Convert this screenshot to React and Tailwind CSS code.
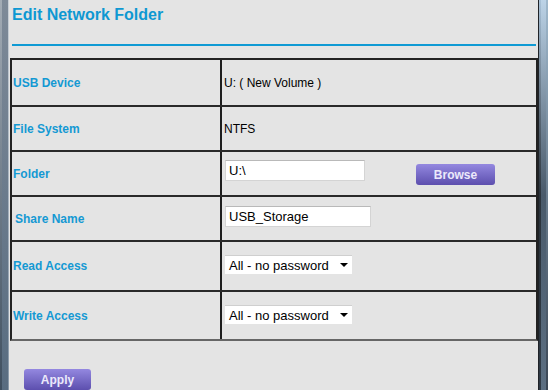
const rows = [
  { label: "USB Device", h: "h-[45px]", kind: "text", value: "U: ( New Volume )" },
  { label: "File System", h: "h-[45px]", kind: "text", value: "NTFS" },
  { label: "Folder", h: "h-[45px]", kind: "folder", value: "U:\\", pad: "pt-[8px]" },
  { label: "Share Name", h: "h-[45px]", kind: "input", value: "USB_Storage", indent: true, pad: "pt-[9px]" },
  { label: "Read Access", h: "h-[50px]", kind: "select", value: "All - no password", pad: "pt-[13px]" },
  { label: "Write Access", h: "h-[49px]", kind: "select", value: "All - no password", pad: "pt-[13px]" },
];

// fake html select, native one draws its own arrow
function FakeSelect({ value }) {
  return (
    <div className="flex items-center w-[127px] h-[19px] bg-white border-t border-[#cfcfcf] pl-[4px] pr-[4px]">
      <span className="flex-1 text-[13px] leading-none text-black whitespace-nowrap">{value}</span>
      <span className="w-0 h-0 border-l-[4px] border-r-[4px] border-t-[4px] border-l-transparent border-r-transparent border-t-black" />
    </div>
  );
}

function PurpleButton({ children, className = "" }) {
  return (
    <button
      className={`block h-[21px] rounded-[3px] bg-gradient-to-b from-[#9488e0] to-[#5d4fae] text-[12px] font-bold text-[#ece9fb] leading-none ${className}`}
    >
      {children}
    </button>
  );
}

function TextBox({ value, w }) {
  return (
    <div className={`${w} h-[21px] bg-white border border-[#d4d4d4] border-t-[#b9b9b9] flex items-center pl-[3px]`}>
      <span className="text-[13px] leading-none text-black">{value}</span>
    </div>
  );
}

export default function App() {
  return (
    <div className="w-[548px] h-[390px] flex overflow-hidden bg-[#e4e4e4] font-['Liberation_Sans',Arial,sans-serif]">
      <div className="w-[9px] shrink-0 flex">
        <div className="w-[2px] bg-gradient-to-b from-[#a3acb5] to-[#3f4f5f]" />
        <div className="flex-1 bg-gradient-to-b from-[#7e8a98] to-[#586c80]" />
        <div className="w-[1px] bg-gradient-to-b from-[#c9d0d7] to-[#8797a7]" />
      </div>

      <div className="w-[529px] shrink-0 flex flex-col">
        <div className="h-[44px] shrink-0 pl-[3px] pt-[6px]">
          <h1 className="text-[16px] font-bold text-[#0e98d2] leading-[18px]">Edit Network Folder</h1>
        </div>
        <div className="ml-[3px] w-[524px] h-[2px] shrink-0 bg-[#0f9ad4]" />

        <div className="mt-[12px] ml-[1px] w-[528px] shrink-0 border-2 border-[#222] border-b-[#666] flex flex-col">
          {rows.map((r, i) => (
            <div key={r.label} className={`flex shrink-0 ${r.h} ${i > 0 ? "border-t-2 border-[#2a2a2a]" : ""}`}>
              <div className="w-[210px] shrink-0 border-r-2 border-[#1e1e1e] flex items-center pl-[1px]">
                <span className={`text-[12px] font-bold text-[#1499d3] ${r.indent ? "pl-[2px]" : ""}`}>{r.label}</span>
              </div>
              <div className={`flex-1 flex ${r.pad ? "items-start " + r.pad : "items-center"}`}>
                {r.kind === "text" && <span className="pl-[2px] text-[12px] text-black">{r.value}</span>}
                {r.kind === "folder" && (
                  <div className="flex items-start pl-[3px]">
                    <TextBox value={r.value} w="w-[140px]" />
                    <PurpleButton className="ml-[51px] w-[79px] mt-[4px]">Browse</PurpleButton>
                  </div>
                )}
                {r.kind === "input" && (
                  <div className="pl-[3px]">
                    <TextBox value={r.value} w="w-[146px]" />
                  </div>
                )}
                {r.kind === "select" && (
                  <div className="pl-[3px]">
                    <FakeSelect value={r.value} />
                  </div>
                )}
              </div>
            </div>
          ))}
        </div>

        <div className="pl-[15px] pt-[28px] shrink-0">
          <PurpleButton className="w-[67px]">Apply</PurpleButton>
        </div>
      </div>

      <div className="w-[10px] shrink-0 flex">
        <div className="w-[1px] bg-[#1f2328]" />
        <div className="w-[2px] bg-gradient-to-b from-[#a9c2d8] via-[#2c343c] to-[#2e3944]" />
        <div className="flex-1 bg-gradient-to-b from-[#bcd3e7] via-[#4a5a6a] to-[#5b6e81]" />
        <div className="w-[2px] bg-gradient-to-b from-[#9fb8cc] to-[#3a4654]" />
      </div>
    </div>
  );
}
